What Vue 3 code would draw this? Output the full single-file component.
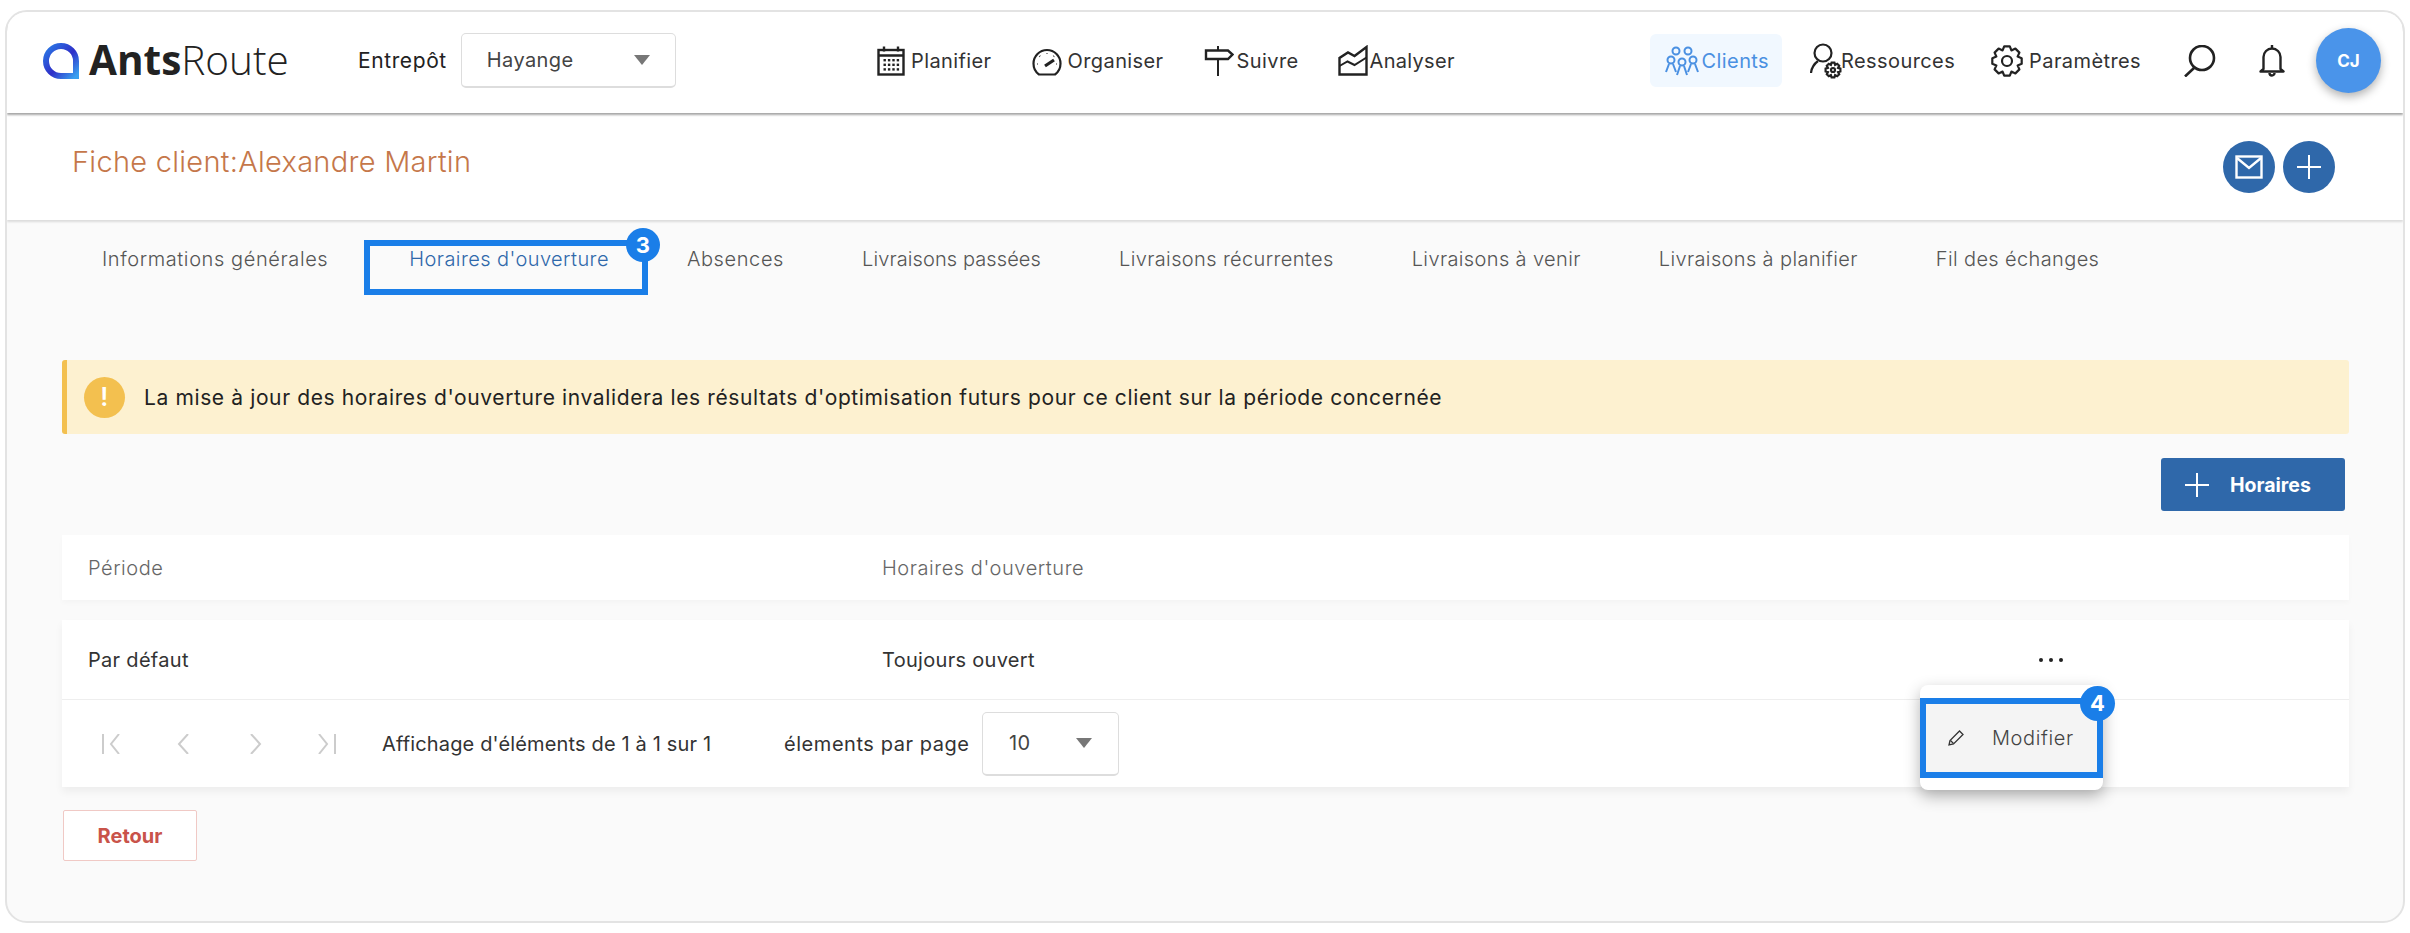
<script setup>
const tabs = [
  'Informations générales', "Horaires d'ouverture", 'Absences', 'Livraisons passées',
  'Livraisons récurrentes', 'Livraisons à venir', 'Livraisons à planifier', 'Fil des échanges',
]

// outline of a cog, used by the two settings icons
function gear(cx, cy, outer, inner, teeth) {
  const step = (Math.PI * 2) / teeth
  let d = ''
  for (let i = 0; i < teeth; i++) {
    const a = i * step
    const pts = [
      [inner, a - step * 0.5], [outer, a - step * 0.24], [outer, a + step * 0.24],
    ]
    for (const [r, t] of pts) {
      d += (d ? 'L' : 'M') + (cx + r * Math.cos(t)).toFixed(1) + ' ' + (cy + r * Math.sin(t)).toFixed(1)
    }
  }
  return d + 'Z'
}
const calDots = []
for (let r = 0; r < 3; r++) for (let c = 0; c < 4; c++) calDots.push([6.5 + c * 4.4, 13 + r * 4.6])
</script>

<template>
<div class="frame">
  <header class="topbar">
    <div class="brand">
      <svg class="logo" width="38" height="38" viewBox="0 0 38 38">
        <defs>
          <linearGradient id="lg" x1="0" y1="0" x2="1" y2="1">
            <stop offset="0" stop-color="#2a7ae6" />
            <stop offset="0.55" stop-color="#2f2fc8" />
            <stop offset="1" stop-color="#39a0f0" />
          </linearGradient>
        </defs>
        <path d="M19 4a15 15 0 0 1 15 15v15H19a15 15 0 0 1 0-30z" fill="none" stroke="url(#lg)" stroke-width="6" />
      </svg>
      <span class="wordmark"><b>Ants</b>Route</span>
    </div>
    <div class="depot">
      <span>Entrepôt</span>
      <div class="select depot-select">Hayange<i class="caret"></i></div>
    </div>

    <nav class="mainnav">
      <a class="navitem">
        <svg width="28" height="30" viewBox="0 0 28 30" fill="none" stroke="#222" stroke-width="2.4">
          <rect x="1.5" y="4" width="25" height="24.5" />
          <path d="M1.5 9.5h25M7 0.5v5M21 0.5v5" />
          <rect v-for="(p, i) in calDots" :key="i" :x="p[0]" :y="p[1]" width="2.4" height="2.4" fill="#222" stroke="none" />
        </svg>
        Planifier
      </a>
      <a class="navitem">
        <svg width="30" height="30" viewBox="0 0 30 30" fill="none" stroke="#222" stroke-width="2.2">
          <path d="M7 28.5C3.5 26 1.5 22 1.5 17.5a13.5 13.5 0 0 1 27 0c0 4.5-2 8.5-5.5 11z" />
          <path d="M15 7v.5M7.5 10l.5.5M5 18h.5M24.5 18h.5M22 10l-.5.5" stroke-width="2" />
          <path d="M13 20l9-6" stroke-width="3.2" />
        </svg>
        Organiser
      </a>
      <a class="navitem tight">
        <svg width="30" height="30" viewBox="0 0 30 30" fill="none" stroke="#222" stroke-width="2.4">
          <path d="M14 0v30" stroke-width="2" />
          <path d="M2 4.5h22l4.5 4-4.5 4.5H2z" fill="#fff" />
        </svg>
        Suivre
      </a>
      <a class="navitem analyse">
        <svg width="30" height="31" viewBox="0 0 30 31" fill="none" stroke="#222" stroke-width="2.4">
          <path d="M1.5 29.5V13l8.5-5.5 6.5 3.5L28.5 2v27.5z" />
          <path d="M1.5 21l8-4.5 7 3.5 12-7.5" stroke-width="2" />
        </svg>
        Analyser
      </a>
    </nav>

    <div class="rightnav">
      <a class="navitem active">
        <svg width="34" height="30" viewBox="0 0 34 30" fill="none" stroke="#4a90e2" stroke-width="2">
          <circle cx="11" cy="5" r="3.5" />
          <circle cx="23" cy="5" r="3.5" />
          <circle cx="6" cy="14" r="3.5" />
          <circle cx="17" cy="16" r="3.5" />
          <circle cx="28" cy="14" r="3.5" />
          <path d="M1 26l3-8M11 26l-3-8M12 29l3-9M22 29l-3-9M23 26l3-8M33 26l-3-8" />
        </svg>
        Clients
      </a>
      <a class="navitem res">
        <svg width="33" height="36" viewBox="0 0 33 36" fill="none" stroke="#222" stroke-width="2.2">
          <circle cx="13" cy="10" r="8.5" />
          <path d="M8 18C4 21 1.5 25 1 30" />
          <path :d="gear(23, 27, 7.5, 5.5, 8)" />
          <circle cx="23" cy="27" r="2" />
        </svg>
        Ressources
      </a>
      <a class="navitem">
        <svg width="32" height="32" viewBox="0 0 32 32" fill="none" stroke="#222" stroke-width="2.2">
          <path :d="gear(16, 16, 15, 11.5, 8)" stroke-linejoin="round" />
          <circle cx="16" cy="16" r="5" />
        </svg>
        Paramètres
      </a>
      <svg class="search" width="33" height="32" viewBox="0 0 33 32" fill="none" stroke="#222" stroke-width="2.6">
        <circle cx="19" cy="13" r="12" />
        <path d="M11 23L2 31.5" />
      </svg>
      <svg class="bell" width="26" height="33" viewBox="0 0 26 33" fill="none" stroke="#222" stroke-width="2.4">
        <path d="M13 1v3M4.5 25V13a8.5 8.5 0 0 1 17 0v12l3 2.5H1.5z" stroke-linejoin="round" />
        <path d="M10.5 29a2.5 2.5 0 0 0 5 0" />
      </svg>
      <div class="avatar">CJ</div>
    </div>
  </header>

  <section class="titlebar">
    <h1>Fiche client:Alexandre Martin</h1>
    <div class="title-actions">
      <button class="round">
        <svg width="28" height="24" viewBox="0 0 28 24" fill="none" stroke="#fff" stroke-width="2.4">
          <rect x="1.5" y="1.5" width="25" height="21" />
          <path d="M2 3l12 10L26 3" />
        </svg>
      </button>
      <button class="round">
        <svg width="26" height="26" viewBox="0 0 26 26" stroke="#fff" stroke-width="2"><path d="M13 1v24M1 13h24" /></svg>
      </button>
    </div>
  </section>

  <ul class="tabs">
    <li v-for="(t, i) in tabs" :key="t" :class="{ current: i === 1 }">
      {{ t }}
      <span v-if="i === 1" class="callout tab-callout"><em class="badge">3</em></span>
    </li>
  </ul>

  <main class="content">
    <div class="alert">
      <span class="alert-icon">!</span>
      La mise à jour des horaires d'ouverture invalidera les résultats d'optimisation futurs pour ce client sur la période concernée
    </div>

    <div class="toolbar">
      <button class="primary">
        <svg width="24" height="24" viewBox="0 0 24 24" stroke="#fff" stroke-width="2"><path d="M12 0v24M0 12h24" /></svg>
        Horaires
      </button>
    </div>

    <div class="thead">
      <div>Période</div>
      <div>Horaires d'ouverture</div>
    </div>

    <div class="rows">
      <div class="row">
        <div>Par défaut</div>
        <div>Toujours ouvert</div>
        <span class="dots"><i></i><i></i><i></i></span>
      </div>
      <div class="pager">
        <div class="pager-btns">
          <svg width="22" height="20" viewBox="0 0 22 20" fill="none" stroke="#ccc" stroke-width="2"><path d="M2 0v20M18 0l-8 10 8 10" /></svg>
          <svg width="14" height="20" viewBox="0 0 14 20" fill="none" stroke="#ccc" stroke-width="2"><path d="M12 0L3 10l9 10" /></svg>
          <svg width="14" height="20" viewBox="0 0 14 20" fill="none" stroke="#ccc" stroke-width="2"><path d="M2 0l9 10-9 10" /></svg>
          <svg width="22" height="20" viewBox="0 0 22 20" fill="none" stroke="#ccc" stroke-width="2"><path d="M20 0v20M4 0l8 10-8 10" /></svg>
        </div>
        <span class="pager-info">Affichage d'éléments de 1 à 1 sur 1</span>
        <span class="pager-size">élements par page</span>
        <div class="select size-select">10<i class="caret"></i></div>
      </div>

      <div class="menu">
        <div class="menu-item">
          <svg width="16" height="16" viewBox="0 0 16 16" fill="none" stroke="#333" stroke-width="1.3">
            <path d="M1 15l1-4.5L11.5 1 15 4.5 5.5 14z" />
            <path d="M2.5 10.5l3 3" />
          </svg>
          Modifier
          <span class="callout menu-callout"><em class="badge">4</em></span>
        </div>
      </div>
    </div>

    <button class="back">Retour</button>
  </main>
</div>
</template>

<style scoped>
.frame {
  box-sizing: border-box;
  width: 2400px; height: 913px;
  margin: 10px 5px 0;
  border: 2px solid #e3e3e3;
  border-radius: 22px;
  background: #fafafa;
  overflow: hidden;
  display: flex; flex-direction: column;
  font-family: Inter, "Liberation Sans", sans-serif;
  font-size: 20px;
  letter-spacing: .4px;
  color: #333;
}

/* top bar */
.topbar {
  flex: none;
  box-sizing: border-box;
  height: 101px;
  background: #fff;
  display: flex; align-items: center;
  padding: 0 0 4px 35px;
  box-shadow: 0 2px 2px rgba(0,0,0,.35);
  position: relative;
  z-index: 2;
}
.brand { display: flex; align-items: center; gap: 9px; width: 316px; }
.wordmark { font-family: "Open Sans", sans-serif; font-size: 40.5px; font-weight: 300; color: #222; line-height: 1; letter-spacing: 0; }
.wordmark b { font-weight: 700; }
.depot { display: flex; align-items: center; gap: 14px; width: 519px; color: #222; font-size: 21px; letter-spacing: .6px; }
.select {
  box-sizing: border-box;
  display: flex; align-items: center; justify-content: space-between;
  background: #fff;
  border: 1px solid #ddd;
  border-bottom-width: 2px;
  border-radius: 5px;
  color: #444;
  font-size: 20px;
  letter-spacing: .4px;
}
.depot-select { width: 215px; height: 55px; padding: 0 25px; }
.caret { width: 0; height: 0; border: 8px solid transparent; border-top: 10px solid #777; border-bottom: 0; }
.mainnav { display: flex; align-items: center; gap: 40px; }
.navitem { display: flex; align-items: center; gap: 6px; color: #333; white-space: nowrap; }
.tight { gap: 3px; }
.analyse { gap: 2px; margin-left: -1px; letter-spacing: .3px; }
.res { gap: 0; }
.res svg { margin-right: -2px; }
.rightnav { margin-left: auto; margin-right: 22px; display: flex; align-items: center; }
.rightnav .navitem { margin-right: 38px; }
.rightnav .res { margin-right: 36px; }
.rightnav .navitem:nth-child(3) { margin-right: 42px; }
.active {
  height: 53px; padding: 0 13px 0 15px;
  margin-right: 28px !important;
  background: #f1f8ff;
  border-radius: 6px;
  color: #4a90e2;
  gap: 3px;
}
.navitem svg { flex: none; }
.search { margin-right: 43px; }
.bell { margin-right: 31px; }
.avatar {
  width: 65px; height: 65px;
  border-radius: 50%;
  background: #4a94ea;
  color: #fff;
  font-weight: 700; font-size: 17px;
  letter-spacing: 0;
  display: flex; align-items: center; justify-content: center;
  box-shadow: 0 4px 10px rgba(0,0,0,.3);
}

/* client title */
.titlebar {
  flex: none;
  height: 107px;
  background: #fff;
  display: flex; justify-content: space-between;
  box-shadow: 0 2px 2px rgba(0,0,0,.12);
  position: relative;
  z-index: 1;
}
h1 { margin: 31px 0 0 65px; font-size: 29px; line-height: 36px; font-weight: 300; color: #c5774a; letter-spacing: .28px; }
.title-actions { display: flex; gap: 8px; margin: 28px 68px 0 0; }
.round {
  width: 52px; height: 52px;
  border: 0; padding: 0;
  border-radius: 50%;
  background: #2f68aa;
  display: flex; align-items: center; justify-content: center;
}

/* tabs */
.tabs {
  flex: none;
  display: flex; gap: 78px;
  list-style: none;
  margin: 0; padding: 27px 0 0 95px;
  height: 23px;
  line-height: 24px;
  font-weight: 300;
  letter-spacing: .6px;
  color: #555;
}
.tabs li { position: relative; white-space: nowrap; }
.tabs li:nth-child(2) { letter-spacing: .42px; margin-left: 3px; }
.tabs li:nth-child(n+5) { letter-spacing: .37px; }
.tabs li:nth-child(4) { letter-spacing: .1px; }
.tabs .current { color: #2f68aa; }
.callout {
  position: absolute;
  box-sizing: border-box;
  border: 6px solid #1a7ee8;
}
.tab-callout { left: -45px; right: -39px; top: -7px; height: 55px; }
.badge {
  position: absolute;
  width: 34px; height: 34px;
  border-radius: 50%;
  background: #1a7ee8;
  color: #fff;
  font: 700 22px/34px Inter, sans-serif;
  letter-spacing: 0;
  text-align: center;
}
.tab-callout .badge { right: -18px; top: -18px; }

/* page body */
.content { flex: 1; padding: 90px 54px 0 55px; }
.alert {
  box-sizing: border-box;
  height: 74px;
  background: #fdf1d0;
  border-left: 5px solid #f3c04f;
  border-radius: 3px;
  display: flex; align-items: center;
  padding-left: 17px;
  color: #222;
  font-size: 21px;
  letter-spacing: .62px;
}
.alert-icon {
  width: 41px; height: 41px;
  margin-right: 19px;
  border-radius: 50%;
  background: #f3c04f;
  color: #fff;
  font-weight: 600; font-size: 25px;
  display: flex; align-items: center; justify-content: center;
}
.toolbar { display: flex; justify-content: flex-end; padding: 24px 4px 24px 0; }
.primary {
  width: 184px; height: 53px;
  border: 0; border-radius: 3px;
  background: #2f68aa;
  color: #fff;
  font: 700 19.5px Inter, sans-serif;
  display: flex; align-items: center; gap: 21px;
  padding: 0 0 0 24px;
}
.thead, .row {
  display: grid; grid-template-columns: 794px 1fr;
  align-items: center;
  background: #fff;
  padding-left: 26px;
  position: relative;
}
.thead {
  height: 65px;
  font-weight: 300; color: #666;
  letter-spacing: .55px;
  box-shadow: 0 3px 5px rgba(0,0,0,.025);
}
.rows { margin-top: 20px; position: relative; box-shadow: 0 5px 8px rgba(0,0,0,.05); }
.row { height: 79px; border-bottom: 1px solid #eee; box-sizing: content-box; letter-spacing: .3px; }
.dots {
  position: absolute; left: 1977px; top: 38px;
  display: flex; gap: 6px;
}
.dots i { width: 4px; height: 4px; border-radius: 50%; background: #222; }
.pager {
  height: 87px;
  background: #fff;
  display: flex; align-items: center;
  padding-left: 39px;
  letter-spacing: .15px;
}
.pager-btns { display: flex; align-items: center; width: 281px; }
.pager-btns svg:nth-child(1) { margin-right: 53px; }
.pager-btns svg:nth-child(2) { margin-right: 59px; }
.pager-btns svg:nth-child(3) { margin-right: 52px; }
.pager-info { width: 402px; }
.pager-size { width: 198px; letter-spacing: .55px; }
.size-select { width: 137px; height: 64px; padding: 0 26px; }

/* row action menu */
.menu {
  position: absolute;
  left: 1858px; top: 65px;
  width: 183px;
  padding: 13px 0 12px;
  background: #fff;
  border-radius: 8px;
  box-shadow: 0 6px 16px rgba(0,0,0,.3);
}
.menu-item {
  position: relative;
  height: 80px;
  background: #f4f4f4;
  display: flex; align-items: center;
  padding-left: 28px;
  gap: 28px;
  color: #444;
  font-weight: 300;
  letter-spacing: .6px;
}
.menu-callout { inset: 0; }
.menu-callout .badge { right: -18px; top: -18px; width: 35px; height: 35px; line-height: 35px; }

.back {
  display: block;
  width: 134px; height: 51px;
  margin-top: 23px; margin-left: 1px;
  background: #fff;
  border: 1px solid #f0c9c5;
  border-radius: 2px;
  color: #c9534a;
  font: 700 20px Inter, sans-serif;
  padding: 0;
}
</style>

<style>
html, body { background: #fff; }
</style>
